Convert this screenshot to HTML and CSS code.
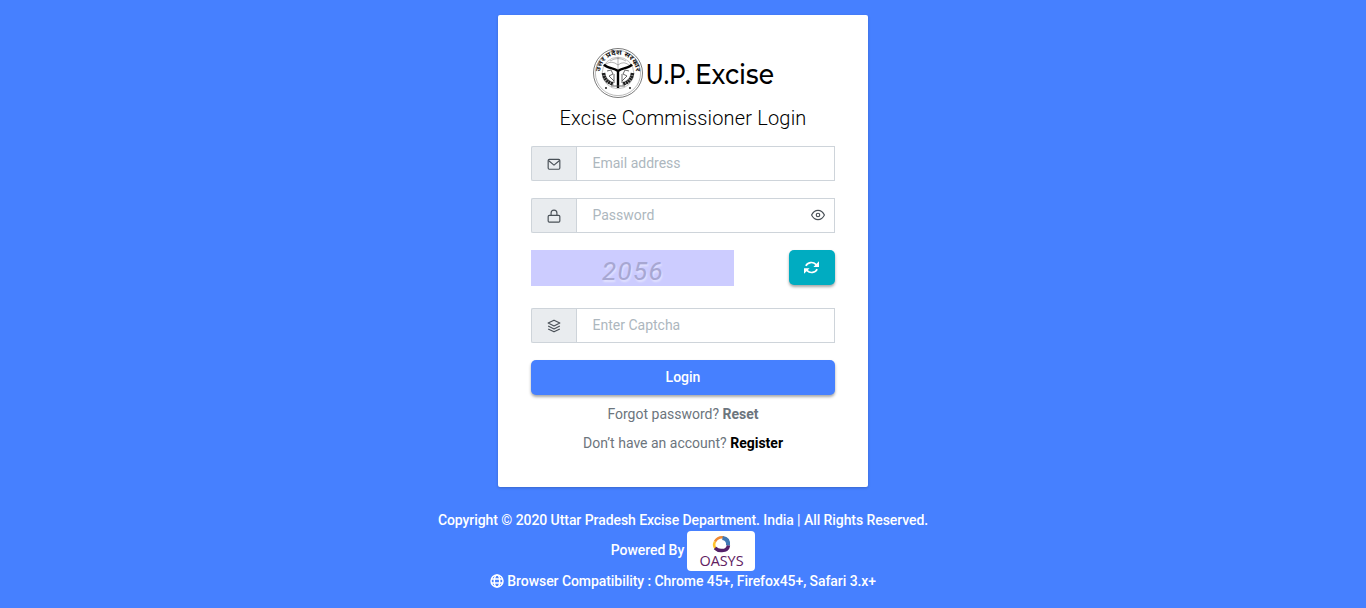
FILE: index.html
```html
<!DOCTYPE html>
<html lang="en">
<head>
<meta charset="utf-8">
<title>U.P. Excise - Login</title>
<link rel="stylesheet" href="styles.css">
</head>
<body>
<main class="card">
  <svg class="brand" width="188" height="52" viewBox="-3 0 188 52">
    <defs><path id="arc" d="M8.300 29A18 18 0 1 1 43.700 29"/></defs>
    <g fill="none" stroke="#222">
      <circle cx="26" cy="26" r="24.500" stroke-width=".6"/>
      <circle cx="26" cy="26" r="22.600" stroke-width=".5" stroke="#777"/>
      <circle cx="26" cy="26" r="15.800" stroke-width=".5" stroke="#888"/>
      <path d="M26 10v12M14 17q6-4 12 1 6-5 12 1M18 14q8-5 16 0" stroke-width=".5" stroke="#666"/>
      <path d="M12 17.500c3 4 10 3 14 6.500 4-3.500 11-2.500 14-6.500M26 23.500v17.500" stroke-width="2.400" stroke="#000"/>
      <path d="M11.500 26q1 9 10 11M40.500 26q-1 9-10 11" stroke-width="3.600" stroke-dasharray="2.200 .4"/>
      <path d="M15 24l4-1 2 4-4 2 5 5M37 24l-4-1-2 4 4 2-5 5M22 27v9M30 27v9M19 39h14" stroke-width=".9" stroke="#555"/>
    </g>
    <circle cx="14" cy="41" r=".9"/><circle cx="38" cy="41" r=".9"/>
    <text class="seal-text"><textPath href="#arc" startOffset="50%" text-anchor="middle" textLength="54" lengthAdjust="spacingAndGlyphs">उत्तर प्रदेश सरकार</textPath></text>
    <text class="brand-name" x="53.500" y="36.500" textLength="45" lengthAdjust="spacingAndGlyphs">U.P.</text>
    <text class="brand-name" x="103" y="36.500" textLength="79" lengthAdjust="spacingAndGlyphs">Excise</text>
  </svg>
  <h1 class="title">Excise Commissioner Login</h1>
  <form>
    <div class="field">
      <span class="addon"><svg class="icon" viewBox="0 0 24 24"><rect x="2" y="4" width="20" height="17" rx="2"/><path d="M2.500 6l9.500 8 9.500-8"/></svg></span>
      <input class="input" type="text" placeholder="Email address">
    </div>
    <div class="field">
      <span class="addon"><svg class="icon" viewBox="0 0 24 24"><rect x="2" y="11" width="20" height="11.500" rx="2"/><path d="M7 11V7a5 5 0 0 1 10 0v4"/></svg></span>
      <input class="input" type="password" placeholder="Password">
      <svg class="icon eye" viewBox="0 0 24 24"><path d="M1 12s4-8 11-8 11 8 11 8-4 8-11 8S1 12 1 12z"/><circle cx="12" cy="12" r="3"/></svg>
    </div>
    <div class="captcha-row">
      <div class="captcha">2056</div>
      <button class="refresh" type="button" aria-label="Refresh"><svg viewBox="0 0 24 24" width="15" height="15"><path d="M3 9.500a9.500 8.500 0 0 1 16-2.500L21 8.500M21 14.500a9.500 8.500 0 0 1-16 2.500L3 15.500" fill="none" stroke="#fff" stroke-width="2.600"/><path d="M24 2v9h-9zM0 22v-9h9z" fill="#fff"/></svg></button>
    </div>
    <div class="field">
      <span class="addon"><svg class="icon" viewBox="0 0 24 24"><path d="M12 2L2 7l10 5 10-5-10-5zM2 12l10 5 10-5M2 17l10 5 10-5"/></svg></span>
      <input class="input" type="text" placeholder="Enter Captcha">
    </div>
    <button class="login" type="button">Login</button>
  </form>
  <p class="help">Forgot password? <a class="reset">Reset</a></p>
  <p class="help">Don’t have an account? <a class="register">Register</a></p>
</main>
<footer class="footer">
  <div class="line">Copyright © 2020 Uttar Pradesh Excise Department. India | All Rights Reserved.</div>
  <div class="powered"><span class="powered-label">Powered By</span>
    <svg class="vendor" width="68" height="40" viewBox="0 0 68 40">
      <g fill="none">
        <path d="M29.500 18.500A7.500 7 0 0 1 28 10.500" stroke="#ffc32b" stroke-width="2.500"/>
        <path d="M28 10.500Q31 5.500 37 6.500" stroke="#f08a32" stroke-width="2.500"/>
        <path d="M35.500 7Q42 8 41 14.500" stroke="#3f78b5" stroke-width="4"/>
        <path d="M41.500 14.500Q40.500 20 34 19.500Q30.500 19.500 28 17" stroke="#542069" stroke-width="3.500"/>
      </g>
      <text class="vendor-name" x="12.500" y="35" textLength="44" lengthAdjust="spacingAndGlyphs">OASYS</text>
    </svg>
  </div>
  <div class="line"><svg class="globe" viewBox="0 0 14 14"><circle cx="7" cy="7" r="6"/><ellipse cx="7" cy="7" rx="2.700" ry="6"/><path d="M1.300 5h11.400M1.300 9h11.400"/></svg> Browser Compatibility : Chrome 45+, Firefox45+, Safari 3.x+</div>
</footer>
</body>
</html>
```
FILE: styles.css
```css
* { box-sizing: border-box; }
body {
  margin: 0;
  height: 608px;
  overflow: hidden;
  padding-top: 15px;
  background: #4680ff;
  font: 400 14px/21px Roboto, sans-serif;
  color: #6c757d;
  text-align: center;
}
.card {
  width: 370px;
  height: 472px;
  margin: 0 auto;
  padding: 32px 33px;
  background: #fff;
  border-radius: 2px;
  box-shadow: 0 1px 3px rgba(0, 0, 0, .2);
}
.brand { display: block; margin: 0 auto; overflow: visible; }
.brand-name { font: 500 28px Montserrat, Inter, sans-serif; fill: #000; }
.seal-text { font: 700 6.500px "Noto Sans", "Noto Sans Devanagari", sans-serif; fill: #111; }
.title {
  margin: 7px 0 16px;
  font-size: 20px;
  font-weight: 300;
  line-height: 24px;
  letter-spacing: .18px;
  color: #000;
}
.field { position: relative; display: flex; height: 35px; margin-bottom: 17px; }
.addon {
  display: flex;
  align-items: center;
  justify-content: center;
  width: 45px;
  border: 1px solid #ced4da;
  border-right: 0;
  border-radius: 2px 0 0 2px;
  background: #e9ecef;
}
.icon { width: 14px; height: 14px; fill: none; stroke: #495057; stroke-width: 2; stroke-linejoin: round; }
.input {
  flex: 1;
  min-width: 0;
  padding: 0 15.500px;
  border: 1px solid #ced4da;
  border-radius: 0;
  font: 400 14px/21px Roboto, sans-serif;
}
.input::placeholder { color: #adb7be; opacity: 1; }
.eye { position: absolute; right: 10px; top: 10px; }
.captcha-row { display: flex; justify-content: space-between; height: 36px; margin-bottom: 22px; }
.captcha {
  width: 203px;
  background: #ccf;
  color: #a7a7d2;
  font: italic 400 26px/42px Roboto, sans-serif;
  letter-spacing: 1.300px;
  padding-left: 1px;
  text-shadow: 1px 2px 2px rgba(255, 255, 255, .45);
}
.refresh, .login {
  height: 35px;
  padding: 0;
  border: 0;
  border-radius: 5px;
  color: #fff;
  box-shadow: 0 2px 3px rgba(0, 0, 0, .35);
}
.refresh { display: flex; align-items: center; justify-content: center; width: 46px; padding: 0 1px 1px 0; background: #00acc1; }
.login {
  display: block;
  width: 100%;
  margin-bottom: 9px;
  background: #4680ff;
  font: 500 14px/35px Roboto, sans-serif;
}
.help { margin: 0 0 8px; }
.reset, .register { font-weight: 700; }
.register { color: #000; }
.footer { padding-top: 23px; color: #fff; font-weight: 500; letter-spacing: -.068px; }
.line { height: 21px; }
.powered { display: flex; align-items: center; justify-content: center; gap: 3px; height: 40px; }
.powered-label { margin-top: -2px; }
.vendor { background: #fff; border-radius: 4px; }
.vendor-name { font: 400 15px "Open Sans", sans-serif; fill: #61205f; }
.globe { width: 14px; height: 14px; vertical-align: -2px; fill: none; stroke: #fff; stroke-width: 1.500; }
```
